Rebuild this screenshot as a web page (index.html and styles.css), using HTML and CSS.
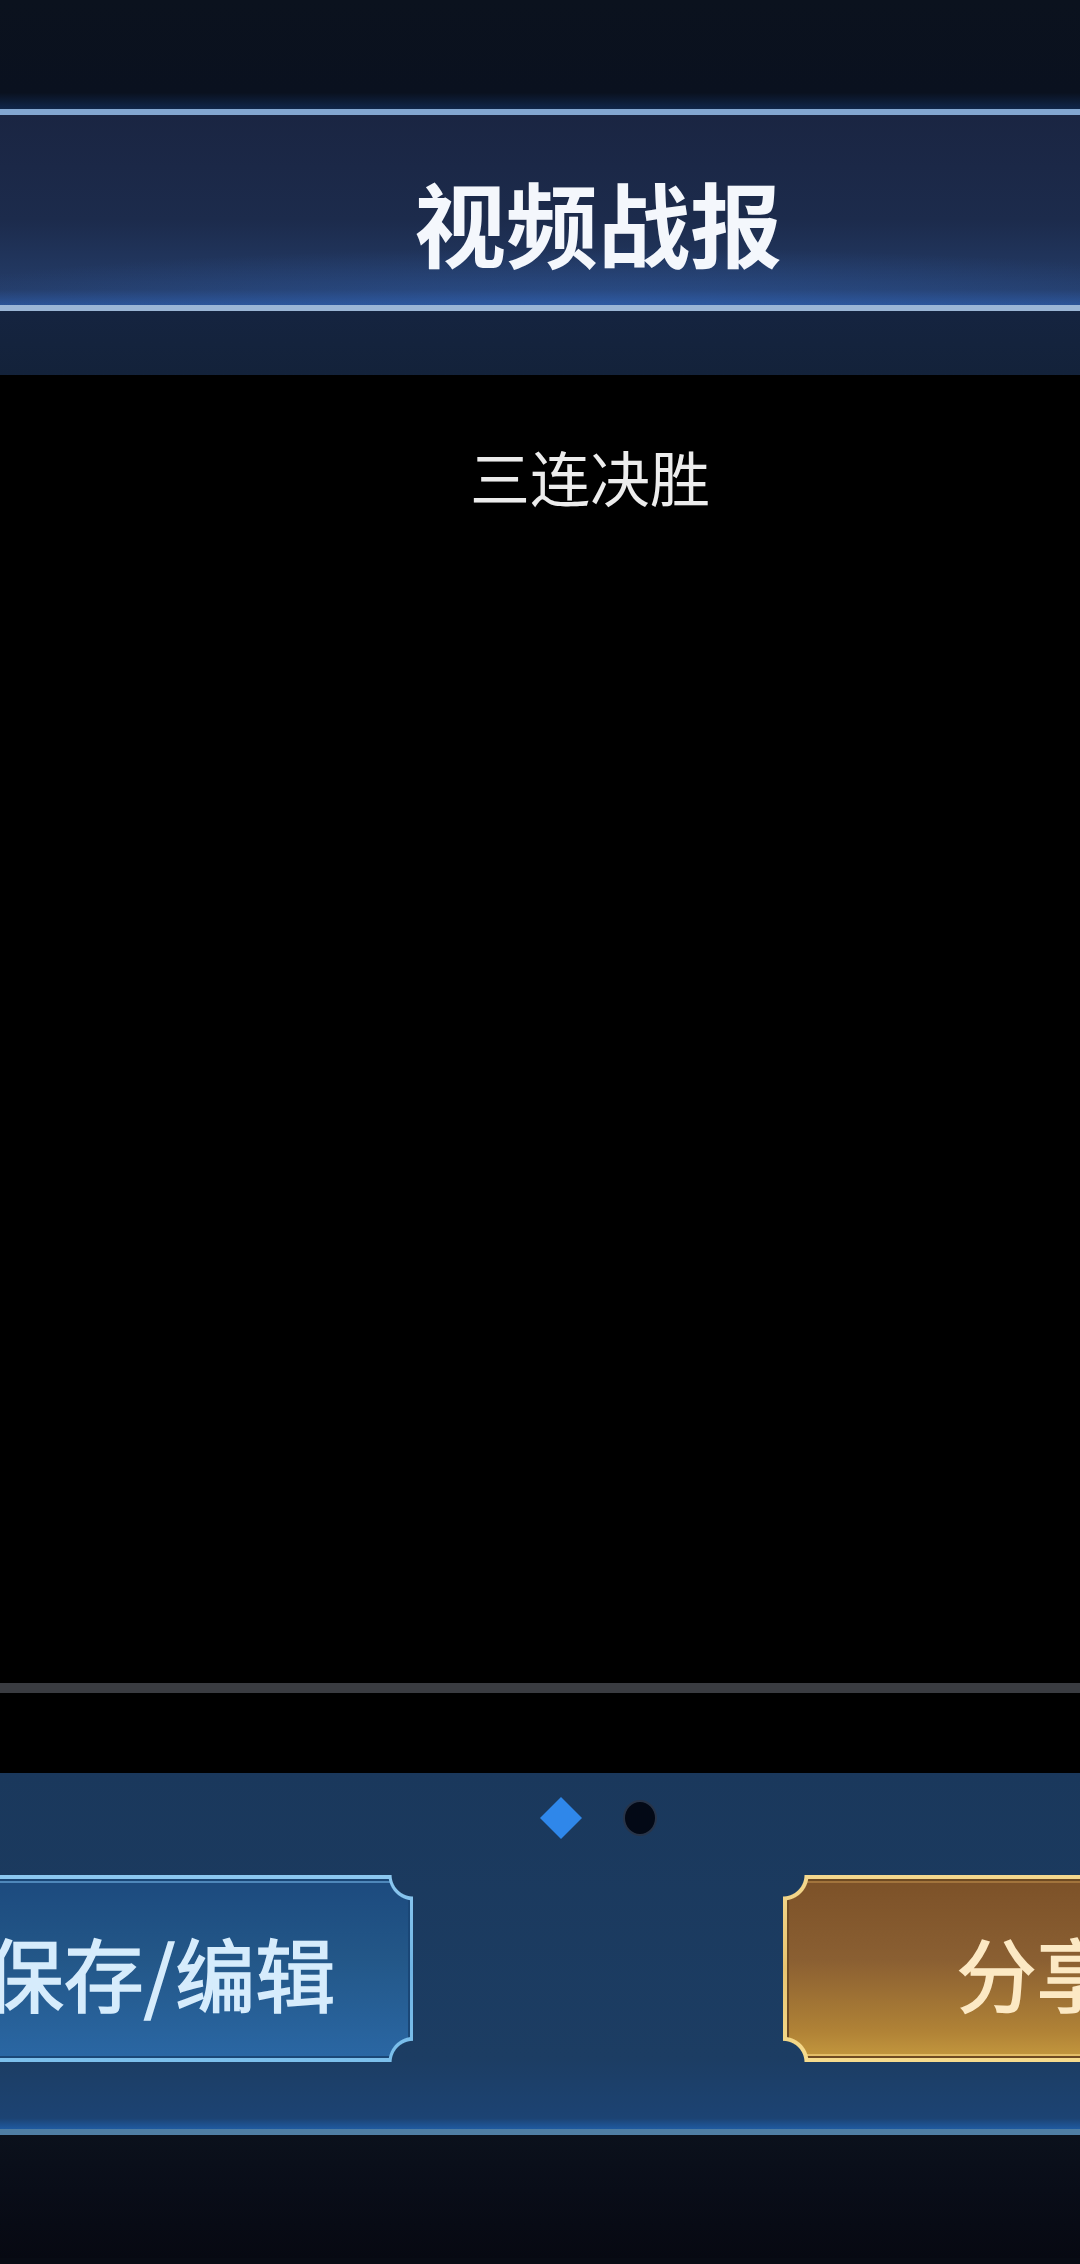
FILE: index.html
```html
<!DOCTYPE html>
<html lang="zh">
<head>
<meta charset="utf-8">
<title>视频战报</title>
<link rel="stylesheet" href="styles.css">
</head>
<body>
<div class="screen">
  <div class="topbar"></div>
  <header class="header">
    <h1 class="title">视频战报</h1>
  </header>
  <div class="substrip"></div>
  <section class="video">
    <div class="caption">三连决胜</div>
    <div class="spacer"></div>
    <div class="progress"></div>
  </section>
  <section class="controls">
    <div class="pager">
      <svg class="diamond" width="44" height="44" viewBox="0 0 44 44"><polygon points="22,1 43,22 22,43 1,22" fill="#2f87ea"/></svg>
      <span class="dot"></span>
    </div>
    <div class="actions">
      <div class="btn btn-blue"><div class="face"><span class="label">保存/编辑</span></div></div>
      <div class="btn btn-gold"><div class="face"><span class="label">分享</span></div></div>
    </div>
  </section>
  <footer class="footer"></footer>
</div>
</body>
</html>
```
FILE: styles.css
```css
html, body {
  margin: 0;
  padding: 0;
  width: 1080px;
  height: 2264px;
  overflow: hidden;
  background: #080b14;
}
.screen {
  width: 1196px;
  display: flex;
  flex-direction: column;
  font-family: "Noto Sans CJK SC", "Noto Sans", sans-serif;
}
.topbar {
  height: 109px;
  background: linear-gradient(180deg, #0b121e 0%, #0a111f 85%, #10264a 100%);
}
.header {
  height: 190px;
  border-top: 6px solid #82a6d0;
  border-bottom: 6px solid #9bb6d6;
  background:
    radial-gradient(ellipse 60% 30% at 50% 100%, rgba(50, 100, 180, 0.45), rgba(50, 100, 180, 0) 100%),
    linear-gradient(180deg, #1a2542 0%, #1c2b4c 55%, #243c68 92%, #2b5294 100%);
  display: flex;
  align-items: center;
  justify-content: center;
  box-sizing: content-box;
}
.title {
  margin: 0;
  padding-top: 22px;
  font-size: 92px;
  line-height: 1;
  font-weight: 700;
  color: #f4f7fc;
  letter-spacing: 0;
}
.substrip {
  height: 64px;
  background: linear-gradient(180deg, #152440 0%, #13223a 100%);
}
.video {
  height: 1398px;
  background: #000;
  display: flex;
  flex-direction: column;
  align-items: center;
  box-sizing: border-box;
  padding-top: 71px;
  padding-bottom: 80px;
}
.caption {
  font-size: 60px;
  line-height: 1;
  color: #ececec;
  padding-right: 16px;
}
.spacer {
  flex: 1;
}
.progress {
  align-self: stretch;
  height: 10px;
  background: #3a3c41;
}
.controls {
  height: 362px;
  box-sizing: border-box;
  padding-top: 23px;
  background: linear-gradient(180deg, #1a385c 0%, #1c3d63 80%, #1c4373 97%, #1f5aa0 100%);
  border-bottom: 6px solid #4f7ea4;
  display: flex;
  flex-direction: column;
  align-items: center;
}
.pager {
  display: flex;
  align-items: center;
  gap: 40px;
  height: 44px;
}
.diamond {
  display: block;
}
.dot {
  width: 30px;
  height: 32px;
  border-radius: 50%;
  background: #030916;
  border: 2px solid rgba(110, 135, 170, 0.35);
}
.actions {
  margin-top: 35px;
  display: flex;
  justify-content: center;
  gap: 369px;
  width: 100%;
}
.btn {
  flex: none;
  width: 508px;
  height: 187px;
  box-sizing: border-box;
  padding: 4px;
  -webkit-mask:
    radial-gradient(circle at 0 0, transparent 21px, #000 22px) top left / 51% 51% no-repeat,
    radial-gradient(circle at 100% 0, transparent 21px, #000 22px) top right / 51% 51% no-repeat,
    radial-gradient(circle at 0 100%, transparent 21px, #000 22px) bottom left / 51% 51% no-repeat,
    radial-gradient(circle at 100% 100%, transparent 21px, #000 22px) bottom right / 51% 51% no-repeat;
  mask:
    radial-gradient(circle at 0 0, transparent 21px, #000 22px) top left / 51% 51% no-repeat,
    radial-gradient(circle at 100% 0, transparent 21px, #000 22px) top right / 51% 51% no-repeat,
    radial-gradient(circle at 0 100%, transparent 21px, #000 22px) bottom left / 51% 51% no-repeat,
    radial-gradient(circle at 100% 100%, transparent 21px, #000 22px) bottom right / 51% 51% no-repeat;
}
.face {
  height: 100%;
  display: flex;
  align-items: center;
  justify-content: center;
  -webkit-mask:
    radial-gradient(circle at -4px -4px, transparent 25px, #000 26px) top left / 51% 51% no-repeat,
    radial-gradient(circle at calc(100% + 4px) -4px, transparent 25px, #000 26px) top right / 51% 51% no-repeat,
    radial-gradient(circle at -4px calc(100% + 4px), transparent 25px, #000 26px) bottom left / 51% 51% no-repeat,
    radial-gradient(circle at calc(100% + 4px) calc(100% + 4px), transparent 25px, #000 26px) bottom right / 51% 51% no-repeat;
  mask:
    radial-gradient(circle at -4px -4px, transparent 25px, #000 26px) top left / 51% 51% no-repeat,
    radial-gradient(circle at calc(100% + 4px) -4px, transparent 25px, #000 26px) top right / 51% 51% no-repeat,
    radial-gradient(circle at -4px calc(100% + 4px), transparent 25px, #000 26px) bottom left / 51% 51% no-repeat,
    radial-gradient(circle at calc(100% + 4px) calc(100% + 4px), transparent 25px, #000 26px) bottom right / 51% 51% no-repeat;
}
.label {
  font-size: 80px;
  line-height: 1;
  font-weight: 400;
  padding-top: 4px;
  -webkit-text-stroke: 1.6px currentColor;
}
.btn-blue {
  background: linear-gradient(180deg, #8cc8f0 0%, #6fb4e4 50%, #7cc0ec 100%);
}
.btn-blue .face {
  background: linear-gradient(180deg, #1c4a7e 0%, #235788 45%, #2a67a4 100%);
  box-shadow: inset 0 0 0 2px #1a4777, inset 0 14px 0 -10px rgba(120, 185, 235, 0.55);
}
.btn-blue .label {
  color: #d6ecfc;
}
.btn-gold {
  background: linear-gradient(180deg, #f4d88e 0%, #e8c470 50%, #f6dc8e 100%);
}
.btn-gold .face {
  background: linear-gradient(180deg, #7c5128 0%, #8a5f32 45%, #b08236 85%, #c4983e 100%);
  box-shadow: inset 0 0 0 2px #6e4a22, inset 0 -14px 0 -10px rgba(250, 215, 130, 0.6), inset 0 14px 0 -10px rgba(200, 150, 80, 0.5);
}
.btn-gold .label {
  color: #fce9c4;
}
.footer {
  height: 123px;
  background: linear-gradient(180deg, #0b111c 0%, #090d18 45%, #070912 100%);
}
```
